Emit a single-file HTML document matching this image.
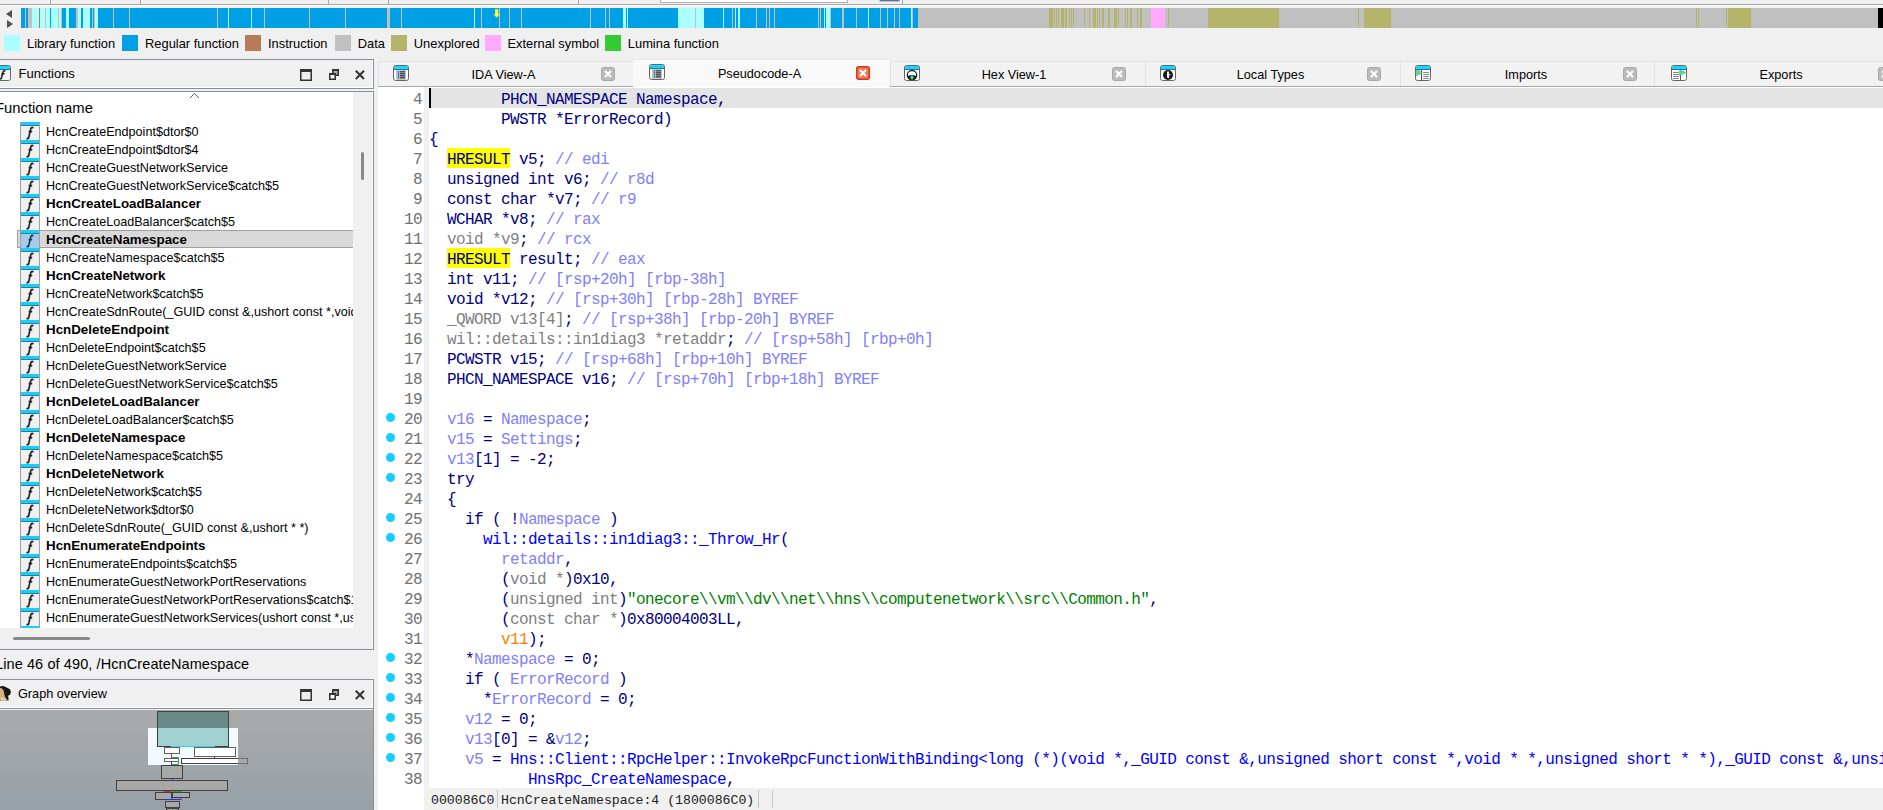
<!DOCTYPE html><html><head><meta charset="utf-8"><style>
*{box-sizing:border-box}
html,body{margin:0;padding:0}
body{width:1883px;height:810px;overflow:hidden;position:relative;background:#f0f0f0;font-family:"Liberation Sans",sans-serif;font-size:12.7px;color:#000}
.abs{position:absolute}
.t{position:absolute;white-space:pre;line-height:18px}
.code{position:absolute;left:429px;white-space:pre;font-family:"Liberation Mono",monospace;font-size:16px;letter-spacing:-0.6px;line-height:20px;color:#000080;height:20px}
.ln{position:absolute;left:378px;width:44px;text-align:right;white-space:pre;font-family:"Liberation Mono",monospace;font-size:16px;letter-spacing:-0.6px;line-height:20px;color:#707070;height:20px}
.g{color:#808080}.l{color:#8080ff}.b{color:#0000ff}.gr{color:#008000}.o{color:#ff8000}.y{}
.dot{position:absolute;left:386.3px;width:9px;height:9px;border-radius:50%;background:#14ceff}
.fr{position:absolute;left:0;width:353px;height:18px}
.fi{position:absolute;left:20px;top:0;width:20px;height:18px;background:#f0f0f0;border-left:1px solid #a0a0a0;border-right:1px solid #a0a0a0}
.fi:before{content:"";position:absolute;left:0;right:0;top:0;height:3px;background:#10d0ff;border-bottom:1px solid #3a7a90}
.fi span{position:absolute;left:4px;top:2px;font-family:"Liberation Serif",serif;font-style:italic;font-size:15px;line-height:16px;color:#202020;font-weight:bold}
.ft{position:absolute;left:46px;top:0;line-height:18px;white-space:pre;font-size:12.6px}
</style></head><body>

<div class="abs" style="left:0;top:4px;width:1883px;height:1px;background:#a8a8a8"></div>
<div class="abs" style="left:0;top:5px;width:1883px;height:1px;background:#fafafa"></div>
<div class="abs" style="left:50px;top:0;width:1px;height:4px;background:#a8a8a8"></div>
<div class="abs" style="left:140px;top:0;width:1px;height:4px;background:#a8a8a8"></div>
<div class="abs" style="left:328px;top:0;width:1px;height:4px;background:#a8a8a8"></div>
<div class="abs" style="left:388px;top:0;width:1px;height:4px;background:#a8a8a8"></div>
<div class="abs" style="left:578px;top:0;width:1px;height:4px;background:#a8a8a8"></div>
<div class="abs" style="left:902px;top:0;width:1px;height:4px;background:#a8a8a8"></div>
<div class="abs" style="left:660px;top:0;width:188px;height:3px;background:#fff;border:1px solid #b0b0b0;border-top:none"></div>
<div class="abs" style="left:879px;top:0;width:21px;height:2px;background:#707070;border:1px solid #9cc8f0;border-top:none;border-radius:0 0 3px 3px"></div>
<svg class="abs" style="left:0;top:8px" width="20" height="20"><path d="M12 2 L6 6 L12 10Z" fill="#505050"/><path d="M7 12 L13 16 L7 20Z" fill="#505050"/></svg>
<svg class="abs" style="left:0;top:8px" width="1883" height="20" shape-rendering="crispEdges"><rect x="21" y="0" width="897" height="20" fill="#00a0e6"/><rect x="25" y="0" width="1" height="20" fill="#c0c0c0"/><rect x="28" y="0" width="4" height="20" fill="#c0c0c0"/><rect x="32" y="0" width="7" height="20" fill="#aaffff"/><rect x="39" y="0" width="1" height="20" fill="#b87b57"/><rect x="40" y="0" width="5" height="20" fill="#aaffff"/><rect x="45" y="0" width="1" height="20" fill="#c0c0c0"/><rect x="46" y="0" width="4" height="20" fill="#aaffff"/><rect x="51" y="0" width="7" height="20" fill="#aaffff"/><rect x="58" y="0" width="1" height="20" fill="#c0c0c0"/><rect x="59" y="0" width="2" height="20" fill="#aaffff"/><rect x="61" y="0" width="1" height="20" fill="#c0c0c0"/><rect x="66" y="0" width="3" height="20" fill="#aaffff"/><rect x="76" y="0" width="2" height="20" fill="#c0c0c0"/><rect x="78" y="0" width="3" height="20" fill="#aaffff"/><rect x="83" y="0" width="7" height="20" fill="#aaffff"/><rect x="92" y="0" width="1" height="20" fill="#c0c0c0"/><rect x="94" y="0" width="1" height="20" fill="#c0c0c0"/><rect x="95" y="0" width="3" height="20" fill="#aaffff"/><rect x="113" y="0" width="1" height="20" fill="#c0c0c0"/><rect x="129" y="0" width="1" height="20" fill="#c0c0c0"/><rect x="217" y="0" width="1" height="20" fill="#c0c0c0"/><rect x="264" y="0" width="1" height="20" fill="#c0c0c0"/><rect x="309" y="0" width="1" height="20" fill="#c0c0c0"/><rect x="345" y="0" width="1" height="20" fill="#c0c0c0"/><rect x="401" y="0" width="1" height="20" fill="#c0c0c0"/><rect x="481" y="0" width="1" height="20" fill="#c0c0c0"/><rect x="499" y="0" width="1" height="20" fill="#c0c0c0"/><rect x="509" y="0" width="1" height="20" fill="#c0c0c0"/><rect x="521" y="0" width="1" height="20" fill="#c0c0c0"/><rect x="590" y="0" width="1" height="20" fill="#c0c0c0"/><rect x="605" y="0" width="1" height="20" fill="#c0c0c0"/><rect x="609" y="0" width="1" height="20" fill="#c0c0c0"/><rect x="695" y="0" width="1" height="20" fill="#c0c0c0"/><rect x="732" y="0" width="1" height="20" fill="#c0c0c0"/><rect x="756" y="0" width="1" height="20" fill="#c0c0c0"/><rect x="766" y="0" width="1" height="20" fill="#c0c0c0"/><rect x="769" y="0" width="1" height="20" fill="#c0c0c0"/><rect x="774" y="0" width="1" height="20" fill="#c0c0c0"/><rect x="818" y="0" width="1" height="20" fill="#c0c0c0"/><rect x="820" y="0" width="1" height="20" fill="#c0c0c0"/><rect x="830" y="0" width="1" height="20" fill="#c0c0c0"/><rect x="842" y="0" width="1" height="20" fill="#c0c0c0"/><rect x="843" y="0" width="1" height="20" fill="#c0c0c0"/><rect x="856" y="0" width="1" height="20" fill="#c0c0c0"/><rect x="880" y="0" width="1" height="20" fill="#c0c0c0"/><rect x="887" y="0" width="1" height="20" fill="#c0c0c0"/><rect x="894" y="0" width="1" height="20" fill="#c0c0c0"/><rect x="899" y="0" width="1" height="20" fill="#c0c0c0"/><rect x="912" y="0" width="1" height="20" fill="#c0c0c0"/><rect x="387" y="0" width="3" height="20" fill="#c0c0c0"/><rect x="228" y="0" width="1" height="20" fill="#aaffff"/><rect x="251" y="0" width="1" height="20" fill="#aaffff"/><rect x="474" y="0" width="1" height="20" fill="#aaffff"/><rect x="723" y="0" width="1" height="20" fill="#aaffff"/><rect x="735" y="0" width="1" height="20" fill="#aaffff"/><rect x="868" y="0" width="1" height="20" fill="#aaffff"/><rect x="911" y="0" width="1" height="20" fill="#aaffff"/><rect x="623" y="0" width="3" height="20" fill="#aaffff"/><rect x="627" y="0" width="1" height="20" fill="#aaffff"/><rect x="678" y="0" width="17" height="20" fill="#aaffff"/><rect x="696" y="0" width="8" height="20" fill="#aaffff"/><rect x="738" y="0" width="2" height="20" fill="#aaffff"/><rect x="824" y="0" width="1" height="20" fill="#aaffff"/><rect x="826" y="0" width="4" height="20" fill="#aaffff"/><rect x="918" y="0" width="960" height="20" fill="#c0c0c0"/><rect x="1878" y="0" width="5" height="20" fill="#000000"/><rect x="1049" y="0" width="4" height="20" fill="#b4b46a"/><rect x="1053.6" y="0" width="1.0" height="20" fill="#b4b46a"/><rect x="1055.5" y="0" width="1.0" height="20" fill="#b4b46a"/><rect x="1058" y="0" width="1" height="20" fill="#b4b46a"/><rect x="1060.5" y="0" width="1.0" height="20" fill="#b4b46a"/><rect x="1062.4" y="0" width="1.3999999999998636" height="20" fill="#b4b46a"/><rect x="1065" y="0" width="2" height="20" fill="#b4b46a"/><rect x="1068.7" y="0" width="1.0" height="20" fill="#b4b46a"/><rect x="1070.7" y="0" width="1.0" height="20" fill="#b4b46a"/><rect x="1072.8" y="0" width="1.2000000000000455" height="20" fill="#b4b46a"/><rect x="1084" y="0" width="1" height="20" fill="#b4b46a"/><rect x="1089" y="0" width="1" height="20" fill="#b4b46a"/><rect x="1093" y="0" width="3" height="20" fill="#b4b46a"/><rect x="1097" y="0" width="1" height="20" fill="#b4b46a"/><rect x="1099" y="0" width="1" height="20" fill="#b4b46a"/><rect x="1102" y="0" width="2" height="20" fill="#b4b46a"/><rect x="1108" y="0" width="2" height="20" fill="#b4b46a"/><rect x="1114" y="0" width="3" height="20" fill="#b4b46a"/><rect x="1118" y="0" width="1" height="20" fill="#b4b46a"/><rect x="1125" y="0" width="1" height="20" fill="#b4b46a"/><rect x="1127" y="0" width="1" height="20" fill="#b4b46a"/><rect x="1130" y="0" width="2" height="20" fill="#b4b46a"/><rect x="1137" y="0" width="1" height="20" fill="#b4b46a"/><rect x="1140" y="0" width="2" height="20" fill="#b4b46a"/><rect x="1168" y="0" width="1" height="20" fill="#b4b46a"/><rect x="1208" y="0" width="71" height="20" fill="#b4b46a"/><rect x="1358" y="0" width="1" height="20" fill="#b4b46a"/><rect x="1364" y="0" width="27" height="20" fill="#b4b46a"/><rect x="1696" y="0" width="1" height="20" fill="#b4b46a"/><rect x="1698" y="0" width="1" height="20" fill="#b4b46a"/><rect x="1726" y="0" width="1" height="20" fill="#b4b46a"/><rect x="1728" y="0" width="23" height="20" fill="#b4b46a"/><rect x="1151" y="0" width="14" height="20" fill="#ffaaff"/></svg><svg class="abs" style="left:0;top:8px" width="600" height="20"><path d="M495 1.2h3.2v5.3h1.6L496.6 9.6L493.4 6.5H495z" fill="#ffff40"/></svg>
<div class="abs" style="left:4px;top:35px;width:16px;height:16px;background:#aaffff"></div>
<div class="t" style="left:27.0px;top:35px;font-size:12.9px">Library function</div>
<div class="abs" style="left:122px;top:35px;width:16px;height:16px;background:#00a0e6"></div>
<div class="t" style="left:145.0px;top:35px;font-size:12.9px">Regular function</div>
<div class="abs" style="left:245px;top:35px;width:16px;height:16px;background:#b87b57"></div>
<div class="t" style="left:268.0px;top:35px;font-size:12.9px">Instruction</div>
<div class="abs" style="left:335px;top:35px;width:16px;height:16px;background:#c0c0c0"></div>
<div class="t" style="left:357.7px;top:35px;font-size:12.9px">Data</div>
<div class="abs" style="left:391px;top:35px;width:16px;height:16px;background:#b4b46a"></div>
<div class="t" style="left:413.8px;top:35px;font-size:12.9px">Unexplored</div>
<div class="abs" style="left:485px;top:35px;width:16px;height:16px;background:#ffaaff"></div>
<div class="t" style="left:507.5px;top:35px;font-size:12.9px">External symbol</div>
<div class="abs" style="left:605px;top:35px;width:16px;height:16px;background:#33cc33"></div>
<div class="t" style="left:627.8px;top:35px;font-size:12.9px">Lumina function</div>
<div class="abs" style="left:-2px;top:59px;width:376px;height:30px;border:1px solid #8a909a;background:#f0f0f0"></div>
<div class="abs" style="left:-1px;top:60px;width:374px;height:28px;border-right:1px solid #fff;border-bottom:1px solid #fff"></div>
<svg class="abs" style="left:-5px;top:65px" width="16" height="16"><rect x="0.5" y="0.5" width="15" height="15" rx="2" fill="#f6f6f6" stroke="#666"/><rect x="1" y="1" width="14" height="3" fill="#10d8ff"/><line x1="1" y1="4.5" x2="15" y2="4.5" stroke="#3a7080"/><path d="M10.4 6.4Q9.3 4.9 8.2 6.6L6.4 12.9Q5.9 14.4 4.4 13.6M6.3 8.7H9.6" stroke="#222" stroke-width="1.6" fill="none"/></svg>
<div class="t" style="left:18.5px;top:65px;font-size:13px">Functions</div>
<svg class="abs" style="left:298px;top:67px" width="70" height="16"><rect x="2.75" y="2.75" width="10.5" height="10.5" stroke="#333" stroke-width="1.5" fill="#eee"/><rect x="2" y="2" width="12" height="3" fill="#333"/><rect x="34.75" y="2.75" width="5.5" height="5.5" stroke="#333" stroke-width="1.5" fill="#aaa"/><rect x="34" y="2" width="7" height="2" fill="#333"/><rect x="31.75" y="6.75" width="5.5" height="5.5" stroke="#333" stroke-width="1.5" fill="#f6f6f6"/><rect x="31" y="6" width="7" height="2" fill="#333"/><path d="M57.8 3.8L66 12M66 3.8L57.8 12" stroke="#333" stroke-width="2"/></svg>
<div class="abs" style="left:-2px;top:91px;width:376px;height:559px;border:1px solid #8a909a;background:#f0f0f0"></div>
<div class="abs" style="left:0;top:92px;width:353px;height:536px;background:#fff;overflow:hidden" id="fl">
<div class="t" style="left:-5px;top:6px;font-size:14.8px;line-height:20px">Function name</div>
<svg class="abs" style="left:189px;top:0px" width="12" height="8"><path d="M1 6L5.5 1.5L10 6" stroke="#606060" stroke-width="1" fill="none"/></svg>
<div class="fr" style="top:30px">
<div class="fi"><svg style="position:absolute;left:-1px;top:0" width="20" height="18"><path d="M13.2 6.2Q12 4.6 10.9 6.4L8.7 15.6Q8.1 17.3 6.6 16.3M8.6 9.7H12.2" stroke="#222" stroke-width="1.7" fill="none"/></svg></div>
<div class="ft" style="top:1px;">HcnCreateEndpoint$dtor$0</div>
</div>
<div class="fr" style="top:48px">
<div class="fi"><svg style="position:absolute;left:-1px;top:0" width="20" height="18"><path d="M13.2 6.2Q12 4.6 10.9 6.4L8.7 15.6Q8.1 17.3 6.6 16.3M8.6 9.7H12.2" stroke="#222" stroke-width="1.7" fill="none"/></svg></div>
<div class="ft" style="top:1px;">HcnCreateEndpoint$dtor$4</div>
</div>
<div class="fr" style="top:66px">
<div class="fi"><svg style="position:absolute;left:-1px;top:0" width="20" height="18"><path d="M13.2 6.2Q12 4.6 10.9 6.4L8.7 15.6Q8.1 17.3 6.6 16.3M8.6 9.7H12.2" stroke="#222" stroke-width="1.7" fill="none"/></svg></div>
<div class="ft" style="top:1px;">HcnCreateGuestNetworkService</div>
</div>
<div class="fr" style="top:84px">
<div class="fi"><svg style="position:absolute;left:-1px;top:0" width="20" height="18"><path d="M13.2 6.2Q12 4.6 10.9 6.4L8.7 15.6Q8.1 17.3 6.6 16.3M8.6 9.7H12.2" stroke="#222" stroke-width="1.7" fill="none"/></svg></div>
<div class="ft" style="top:1px;">HcnCreateGuestNetworkService$catch$5</div>
</div>
<div class="fr" style="top:102px">
<div class="fi"><svg style="position:absolute;left:-1px;top:0" width="20" height="18"><path d="M13.2 6.2Q12 4.6 10.9 6.4L8.7 15.6Q8.1 17.3 6.6 16.3M8.6 9.7H12.2" stroke="#222" stroke-width="1.7" fill="none"/></svg></div>
<div class="ft" style="top:1px;font-weight:bold;font-size:13.35px;">HcnCreateLoadBalancer</div>
</div>
<div class="fr" style="top:120px">
<div class="fi"><svg style="position:absolute;left:-1px;top:0" width="20" height="18"><path d="M13.2 6.2Q12 4.6 10.9 6.4L8.7 15.6Q8.1 17.3 6.6 16.3M8.6 9.7H12.2" stroke="#222" stroke-width="1.7" fill="none"/></svg></div>
<div class="ft" style="top:1px;">HcnCreateLoadBalancer$catch$5</div>
</div>
<div class="abs" style="left:17px;top:138px;width:340px;height:18px;background:#d9d9d9;border:1px solid #a0a0a0"></div>
<div class="fr" style="top:138px">
<div class="fi" style="background:#a8cce8"><svg style="position:absolute;left:-1px;top:0" width="20" height="18"><path d="M13.2 6.2Q12 4.6 10.9 6.4L8.7 15.6Q8.1 17.3 6.6 16.3M8.6 9.7H12.2" stroke="#1a3a5a" stroke-width="1.7" fill="none"/></svg></div>
<div class="ft" style="top:1px;font-weight:bold;font-size:13.35px;">HcnCreateNamespace</div>
</div>
<div class="fr" style="top:156px">
<div class="fi"><svg style="position:absolute;left:-1px;top:0" width="20" height="18"><path d="M13.2 6.2Q12 4.6 10.9 6.4L8.7 15.6Q8.1 17.3 6.6 16.3M8.6 9.7H12.2" stroke="#222" stroke-width="1.7" fill="none"/></svg></div>
<div class="ft" style="top:1px;">HcnCreateNamespace$catch$5</div>
</div>
<div class="fr" style="top:174px">
<div class="fi"><svg style="position:absolute;left:-1px;top:0" width="20" height="18"><path d="M13.2 6.2Q12 4.6 10.9 6.4L8.7 15.6Q8.1 17.3 6.6 16.3M8.6 9.7H12.2" stroke="#222" stroke-width="1.7" fill="none"/></svg></div>
<div class="ft" style="top:1px;font-weight:bold;font-size:13.35px;">HcnCreateNetwork</div>
</div>
<div class="fr" style="top:192px">
<div class="fi"><svg style="position:absolute;left:-1px;top:0" width="20" height="18"><path d="M13.2 6.2Q12 4.6 10.9 6.4L8.7 15.6Q8.1 17.3 6.6 16.3M8.6 9.7H12.2" stroke="#222" stroke-width="1.7" fill="none"/></svg></div>
<div class="ft" style="top:1px;">HcnCreateNetwork$catch$5</div>
</div>
<div class="fr" style="top:210px">
<div class="fi"><svg style="position:absolute;left:-1px;top:0" width="20" height="18"><path d="M13.2 6.2Q12 4.6 10.9 6.4L8.7 15.6Q8.1 17.3 6.6 16.3M8.6 9.7H12.2" stroke="#222" stroke-width="1.7" fill="none"/></svg></div>
<div class="ft" style="top:1px;">HcnCreateSdnRoute(_GUID const &amp;,ushort const *,void * *)</div>
</div>
<div class="fr" style="top:228px">
<div class="fi"><svg style="position:absolute;left:-1px;top:0" width="20" height="18"><path d="M13.2 6.2Q12 4.6 10.9 6.4L8.7 15.6Q8.1 17.3 6.6 16.3M8.6 9.7H12.2" stroke="#222" stroke-width="1.7" fill="none"/></svg></div>
<div class="ft" style="top:1px;font-weight:bold;font-size:13.35px;">HcnDeleteEndpoint</div>
</div>
<div class="fr" style="top:246px">
<div class="fi"><svg style="position:absolute;left:-1px;top:0" width="20" height="18"><path d="M13.2 6.2Q12 4.6 10.9 6.4L8.7 15.6Q8.1 17.3 6.6 16.3M8.6 9.7H12.2" stroke="#222" stroke-width="1.7" fill="none"/></svg></div>
<div class="ft" style="top:1px;">HcnDeleteEndpoint$catch$5</div>
</div>
<div class="fr" style="top:264px">
<div class="fi"><svg style="position:absolute;left:-1px;top:0" width="20" height="18"><path d="M13.2 6.2Q12 4.6 10.9 6.4L8.7 15.6Q8.1 17.3 6.6 16.3M8.6 9.7H12.2" stroke="#222" stroke-width="1.7" fill="none"/></svg></div>
<div class="ft" style="top:1px;">HcnDeleteGuestNetworkService</div>
</div>
<div class="fr" style="top:282px">
<div class="fi"><svg style="position:absolute;left:-1px;top:0" width="20" height="18"><path d="M13.2 6.2Q12 4.6 10.9 6.4L8.7 15.6Q8.1 17.3 6.6 16.3M8.6 9.7H12.2" stroke="#222" stroke-width="1.7" fill="none"/></svg></div>
<div class="ft" style="top:1px;">HcnDeleteGuestNetworkService$catch$5</div>
</div>
<div class="fr" style="top:300px">
<div class="fi"><svg style="position:absolute;left:-1px;top:0" width="20" height="18"><path d="M13.2 6.2Q12 4.6 10.9 6.4L8.7 15.6Q8.1 17.3 6.6 16.3M8.6 9.7H12.2" stroke="#222" stroke-width="1.7" fill="none"/></svg></div>
<div class="ft" style="top:1px;font-weight:bold;font-size:13.35px;">HcnDeleteLoadBalancer</div>
</div>
<div class="fr" style="top:318px">
<div class="fi"><svg style="position:absolute;left:-1px;top:0" width="20" height="18"><path d="M13.2 6.2Q12 4.6 10.9 6.4L8.7 15.6Q8.1 17.3 6.6 16.3M8.6 9.7H12.2" stroke="#222" stroke-width="1.7" fill="none"/></svg></div>
<div class="ft" style="top:1px;">HcnDeleteLoadBalancer$catch$5</div>
</div>
<div class="fr" style="top:336px">
<div class="fi"><svg style="position:absolute;left:-1px;top:0" width="20" height="18"><path d="M13.2 6.2Q12 4.6 10.9 6.4L8.7 15.6Q8.1 17.3 6.6 16.3M8.6 9.7H12.2" stroke="#222" stroke-width="1.7" fill="none"/></svg></div>
<div class="ft" style="top:1px;font-weight:bold;font-size:13.35px;">HcnDeleteNamespace</div>
</div>
<div class="fr" style="top:354px">
<div class="fi"><svg style="position:absolute;left:-1px;top:0" width="20" height="18"><path d="M13.2 6.2Q12 4.6 10.9 6.4L8.7 15.6Q8.1 17.3 6.6 16.3M8.6 9.7H12.2" stroke="#222" stroke-width="1.7" fill="none"/></svg></div>
<div class="ft" style="top:1px;">HcnDeleteNamespace$catch$5</div>
</div>
<div class="fr" style="top:372px">
<div class="fi"><svg style="position:absolute;left:-1px;top:0" width="20" height="18"><path d="M13.2 6.2Q12 4.6 10.9 6.4L8.7 15.6Q8.1 17.3 6.6 16.3M8.6 9.7H12.2" stroke="#222" stroke-width="1.7" fill="none"/></svg></div>
<div class="ft" style="top:1px;font-weight:bold;font-size:13.35px;">HcnDeleteNetwork</div>
</div>
<div class="fr" style="top:390px">
<div class="fi"><svg style="position:absolute;left:-1px;top:0" width="20" height="18"><path d="M13.2 6.2Q12 4.6 10.9 6.4L8.7 15.6Q8.1 17.3 6.6 16.3M8.6 9.7H12.2" stroke="#222" stroke-width="1.7" fill="none"/></svg></div>
<div class="ft" style="top:1px;">HcnDeleteNetwork$catch$5</div>
</div>
<div class="fr" style="top:408px">
<div class="fi"><svg style="position:absolute;left:-1px;top:0" width="20" height="18"><path d="M13.2 6.2Q12 4.6 10.9 6.4L8.7 15.6Q8.1 17.3 6.6 16.3M8.6 9.7H12.2" stroke="#222" stroke-width="1.7" fill="none"/></svg></div>
<div class="ft" style="top:1px;">HcnDeleteNetwork$dtor$0</div>
</div>
<div class="fr" style="top:426px">
<div class="fi"><svg style="position:absolute;left:-1px;top:0" width="20" height="18"><path d="M13.2 6.2Q12 4.6 10.9 6.4L8.7 15.6Q8.1 17.3 6.6 16.3M8.6 9.7H12.2" stroke="#222" stroke-width="1.7" fill="none"/></svg></div>
<div class="ft" style="top:1px;">HcnDeleteSdnRoute(_GUID const &amp;,ushort * *)</div>
</div>
<div class="fr" style="top:444px">
<div class="fi"><svg style="position:absolute;left:-1px;top:0" width="20" height="18"><path d="M13.2 6.2Q12 4.6 10.9 6.4L8.7 15.6Q8.1 17.3 6.6 16.3M8.6 9.7H12.2" stroke="#222" stroke-width="1.7" fill="none"/></svg></div>
<div class="ft" style="top:1px;font-weight:bold;font-size:13.35px;">HcnEnumerateEndpoints</div>
</div>
<div class="fr" style="top:462px">
<div class="fi"><svg style="position:absolute;left:-1px;top:0" width="20" height="18"><path d="M13.2 6.2Q12 4.6 10.9 6.4L8.7 15.6Q8.1 17.3 6.6 16.3M8.6 9.7H12.2" stroke="#222" stroke-width="1.7" fill="none"/></svg></div>
<div class="ft" style="top:1px;">HcnEnumerateEndpoints$catch$5</div>
</div>
<div class="fr" style="top:480px">
<div class="fi"><svg style="position:absolute;left:-1px;top:0" width="20" height="18"><path d="M13.2 6.2Q12 4.6 10.9 6.4L8.7 15.6Q8.1 17.3 6.6 16.3M8.6 9.7H12.2" stroke="#222" stroke-width="1.7" fill="none"/></svg></div>
<div class="ft" style="top:1px;">HcnEnumerateGuestNetworkPortReservations</div>
</div>
<div class="fr" style="top:498px">
<div class="fi"><svg style="position:absolute;left:-1px;top:0" width="20" height="18"><path d="M13.2 6.2Q12 4.6 10.9 6.4L8.7 15.6Q8.1 17.3 6.6 16.3M8.6 9.7H12.2" stroke="#222" stroke-width="1.7" fill="none"/></svg></div>
<div class="ft" style="top:1px;">HcnEnumerateGuestNetworkPortReservations$catch$15</div>
</div>
<div class="fr" style="top:516px">
<div class="fi"><svg style="position:absolute;left:-1px;top:0" width="20" height="18"><path d="M13.2 6.2Q12 4.6 10.9 6.4L8.7 15.6Q8.1 17.3 6.6 16.3M8.6 9.7H12.2" stroke="#222" stroke-width="1.7" fill="none"/></svg></div>
<div class="ft" style="top:1px;">HcnEnumerateGuestNetworkServices(ushort const *,ushort * *)</div>
</div>
<div class="fr" style="top:534px">
<div class="fi"><svg style="position:absolute;left:-1px;top:0" width="20" height="18"><path d="M13.2 6.2Q12 4.6 10.9 6.4L8.7 15.6Q8.1 17.3 6.6 16.3M8.6 9.7H12.2" stroke="#222" stroke-width="1.7" fill="none"/></svg></div>
<div class="ft" style="top:1px;">HcnEnumerateGuestNetworkServicesX</div>
</div>
</div>
<div class="abs" style="left:353px;top:92px;width:20px;height:536px;background:#f0f0f0"></div>
<div class="abs" style="left:361px;top:152px;width:3px;height:28px;background:#888;border-radius:2px"></div>
<div class="abs" style="left:13px;top:637px;width:77px;height:3px;background:#888;border-radius:2px"></div>
<div class="abs" style="left:372px;top:92px;width:1px;height:557px;background:#fff"></div>
<div class="t" style="left:-5px;top:655px;font-size:14.5px;letter-spacing:0.1px;line-height:18px">Line 46 of 490, /HcnCreateNamespace</div>
<div class="abs" style="left:-2px;top:679px;width:376px;height:30px;border:1px solid #8a909a;background:#f0f0f0"></div>
<div class="abs" style="left:-1px;top:680px;width:374px;height:28px;border-right:1px solid #fff;border-bottom:1px solid #fff"></div>
<svg class="abs" style="left:0;top:682px" width="16" height="22"><path d="M0 4.5Q4 3.3 7 5.8Q10.8 6.8 10.8 10Q10.8 13 8.2 13.6L8.6 18.6L0 18.6Z" fill="#161616"/><path d="M0 6Q3 6 3.6 9Q4.4 13 5.2 15Q6.4 17 8 18.6L0 18.6Z" fill="#d4b080"/><path d="M1 15Q4 15.5 6.5 18.6H1Z" fill="#e8d8a0"/></svg>
<div class="t" style="left:18px;top:685px">Graph overview</div>
<svg class="abs" style="left:298px;top:687px" width="70" height="16"><rect x="2.75" y="2.75" width="10.5" height="10.5" stroke="#333" stroke-width="1.5" fill="#eee"/><rect x="2" y="2" width="12" height="3" fill="#333"/><rect x="34.75" y="2.75" width="5.5" height="5.5" stroke="#333" stroke-width="1.5" fill="#aaa"/><rect x="34" y="2" width="7" height="2" fill="#333"/><rect x="31.75" y="6.75" width="5.5" height="5.5" stroke="#333" stroke-width="1.5" fill="#f6f6f6"/><rect x="31" y="6" width="7" height="2" fill="#333"/><path d="M57.8 3.8L66 12M66 3.8L57.8 12" stroke="#333" stroke-width="2"/></svg>
<div class="abs" style="left:0;top:710px;width:373px;height:100px;background:linear-gradient(#aaaaaa,#97a1a9)"></div>
<div class="abs" style="left:373px;top:709px;width:1px;height:101px;background:#8a909a"></div>
<svg class="abs" style="left:0;top:710px" width="373" height="100"><rect x="148" y="18" width="90" height="37" fill="#f2faff"/><rect x="181.5" y="48.5" width="66" height="5" fill="#fff" stroke="#404040" stroke-width="1"/><rect x="238" y="48.5" width="9.5" height="5" fill="#a8a8a8"/><rect x="164.5" y="37.5" width="15" height="6" fill="#fff" stroke="#606060" stroke-width="1"/><rect x="194.5" y="37.5" width="41" height="9" fill="#fff" stroke="#606060" stroke-width="1"/><rect x="164.5" y="48.5" width="14" height="3" fill="#fff" stroke="#606060" stroke-width="1"/><rect x="161.5" y="55.5" width="21" height="13" fill="#a8a8a8" stroke="#404040" stroke-width="1"/><rect x="116.5" y="70.5" width="111" height="10" fill="#a8a8a8" stroke="#404040" stroke-width="1"/><rect x="155.5" y="82.5" width="16" height="7" fill="#a8a8a8" stroke="#404040" stroke-width="1"/><rect x="172.5" y="82.5" width="17" height="5" fill="#a8a8a8" stroke="#404040" stroke-width="1"/><rect x="165.5" y="91.5" width="14" height="6" fill="#a8a8a8" stroke="#404040" stroke-width="1"/><rect x="166.5" y="98.5" width="12" height="3" fill="#a8a8a8" stroke="#404040" stroke-width="1"/><rect x="157.5" y="1.5" width="71" height="35" fill="#6a8a88" stroke="#404040"/><rect x="158" y="18" width="70" height="18" fill="#a0d0d0"/><path d="M171.5 43.5v4.5" stroke="#e03030" fill="none"/><path d="M171.5 47.5h7v7h-6.5" stroke="#30a040" fill="none"/><path d="M171.5 51.5v4" stroke="#3030e0" fill="none"/><path d="M214.5 46.5v2" stroke="#3030e0" fill="none"/><path d="M172.5 68.5v2" stroke="#3030e0" fill="none"/><path d="M163.5 81.5h8" stroke="#d03030" fill="none"/><path d="M172.5 81.5h9" stroke="#30a040" fill="none"/><path d="M164 89.5h17v-2" stroke="#3030e0" fill="none"/><path d="M172.5 98.5v2" stroke="#30a040" fill="none"/><path d="M171 36.5h44" stroke="#20e0f0" fill="none"/></svg>
<div class="abs" style="left:378px;top:86px;width:1505px;height:1px;background:#a8a8a8"></div>
<div class="abs" style="left:378px;top:61px;width:255px;height:25px;background:#f2f2f2;border-top:1px solid #e2e2e2;border-left:1px solid #e2e2e2"></div>
<svg class="abs" style="left:393px;top:65px" width="16" height="16"><rect x="0.5" y="0.5" width="15" height="15" rx="2" fill="#fff" stroke="#666"/><rect x="1" y="1" width="14" height="3" fill="#10d8ff"/><line x1="1" y1="4.5" x2="15" y2="4.5" stroke="#3a7080"/><rect x="3" y="5" width="10" height="10" fill="#c8c8c8"/><circle cx="5.5" cy="6.8" r="0.9" fill="#1a7ac0"/><rect x="7" y="6.3" width="5" height="1.1" fill="#222"/><circle cx="5.5" cy="8.8" r="0.9" fill="#1a7ac0"/><rect x="7" y="8.3" width="5" height="1.1" fill="#222"/><circle cx="5.5" cy="10.8" r="0.9" fill="#1a7ac0"/><rect x="7" y="10.3" width="5" height="1.1" fill="#222"/><circle cx="5.5" cy="12.8" r="0.9" fill="#1a7ac0"/><rect x="7" y="12.3" width="5" height="1.1" fill="#222"/></svg>
<div class="t" style="left:403.5px;width:200px;text-align:center;top:66px;line-height:18px">IDA View-A</div>
<svg class="abs" style="left:601px;top:67px" width="14" height="14"><rect x="0.5" y="0.5" width="13" height="13" rx="2" fill="#bcbcbc" stroke="#a8a8a8"/><path d="M4 4L10 10M10 4L4 10" stroke="#fff" stroke-width="2"/></svg>
<div class="abs" style="left:633px;top:59px;width:257px;height:29px;background:#f9f9f9;border-top:1px solid #e8e8e8"></div>
<svg class="abs" style="left:649px;top:64px" width="16" height="16"><rect x="0.5" y="0.5" width="15" height="15" rx="2" fill="#fff" stroke="#666"/><rect x="1" y="1" width="14" height="3" fill="#10d8ff"/><line x1="1" y1="4.5" x2="15" y2="4.5" stroke="#3a7080"/><rect x="3" y="5" width="10" height="10" fill="#c8c8c8"/><circle cx="5.5" cy="6.8" r="0.9" fill="#1a7ac0"/><rect x="7" y="6.3" width="5" height="1.1" fill="#222"/><circle cx="5.5" cy="8.8" r="0.9" fill="#1a7ac0"/><rect x="7" y="8.3" width="5" height="1.1" fill="#222"/><circle cx="5.5" cy="10.8" r="0.9" fill="#1a7ac0"/><rect x="7" y="10.3" width="5" height="1.1" fill="#222"/><circle cx="5.5" cy="12.8" r="0.9" fill="#1a7ac0"/><rect x="7" y="12.3" width="5" height="1.1" fill="#222"/></svg>
<div class="t" style="left:659.5px;width:200px;text-align:center;top:65px;line-height:18px">Pseudocode-A</div>
<svg class="abs" style="left:856px;top:66px" width="14" height="14"><rect x="0.75" y="0.75" width="12.5" height="12.5" rx="2" fill="#e8805a" stroke="#e0301e" stroke-width="1.5"/><path d="M4 4L10 10M10 4L4 10" stroke="#fff" stroke-width="2"/></svg>
<div class="abs" style="left:890px;top:61px;width:255px;height:25px;background:#f2f2f2;border-top:1px solid #e2e2e2;border-left:1px solid #e2e2e2"></div>
<svg class="abs" style="left:904px;top:65px" width="16" height="16"><rect x="0.5" y="0.5" width="15" height="15" rx="2" fill="#fff" stroke="#666"/><rect x="1" y="1" width="14" height="3" fill="#10d8ff"/><line x1="1" y1="4.5" x2="15" y2="4.5" stroke="#3a7080"/><circle cx="8" cy="10.2" r="4.7" fill="none" stroke="#222" stroke-width="1.3"/><path d="M3.4 11.2Q8 8.6 12.6 11.2Q11.5 15 8 15Q4.5 15 3.4 11.2z" fill="#222"/><ellipse cx="8" cy="12.4" rx="1.4" ry="2" fill="#44ee88"/></svg>
<div class="t" style="left:914px;width:200px;text-align:center;top:66px;line-height:18px">Hex View-1</div>
<svg class="abs" style="left:1112px;top:67px" width="14" height="14"><rect x="0.5" y="0.5" width="13" height="13" rx="2" fill="#bcbcbc" stroke="#a8a8a8"/><path d="M4 4L10 10M10 4L4 10" stroke="#fff" stroke-width="2"/></svg>
<div class="abs" style="left:1145px;top:61px;width:255px;height:25px;background:#f2f2f2;border-top:1px solid #e2e2e2;border-left:1px solid #e2e2e2"></div>
<svg class="abs" style="left:1160px;top:65px" width="16" height="16"><rect x="0.5" y="0.5" width="15" height="15" rx="2" fill="#fff" stroke="#666"/><rect x="1" y="1" width="14" height="3" fill="#10d8ff"/><line x1="1" y1="4.5" x2="15" y2="4.5" stroke="#3a7080"/><circle cx="8" cy="10" r="5" fill="#1a1a1a"/><path d="M7 6.5h2v2.5h1.3v1.2H9V13H7.6L7 12.2z" fill="#fff"/></svg>
<div class="t" style="left:1170.5px;width:200px;text-align:center;top:66px;line-height:18px">Local Types</div>
<svg class="abs" style="left:1367px;top:67px" width="14" height="14"><rect x="0.5" y="0.5" width="13" height="13" rx="2" fill="#bcbcbc" stroke="#a8a8a8"/><path d="M4 4L10 10M10 4L4 10" stroke="#fff" stroke-width="2"/></svg>
<div class="abs" style="left:1400px;top:61px;width:254px;height:25px;background:#f2f2f2;border-top:1px solid #e2e2e2;border-left:1px solid #e2e2e2"></div>
<svg class="abs" style="left:1415px;top:65px" width="16" height="16"><rect x="0.5" y="0.5" width="15" height="15" rx="2" fill="#fff" stroke="#666"/><rect x="1" y="1" width="14" height="3" fill="#10d8ff"/><line x1="1" y1="4.5" x2="15" y2="4.5" stroke="#3a7080"/><line x1="6.5" y1="5" x2="6.5" y2="15" stroke="#555"/><rect x="8.3" y="7" width="5.6" height="0.9" fill="#777"/><rect x="8.3" y="9" width="5.6" height="0.9" fill="#777"/><rect x="8.3" y="11" width="5.6" height="0.9" fill="#777"/><rect x="8.3" y="13" width="5.6" height="0.9" fill="#777"/><path d="M1.3 4.6L7.6 7.6L1.3 10.8z" fill="#55dd99" stroke="#3a9a6a" stroke-width="0.4"/></svg>
<div class="t" style="left:1426px;width:200px;text-align:center;top:66px;line-height:18px">Imports</div>
<svg class="abs" style="left:1623px;top:67px" width="14" height="14"><rect x="0.5" y="0.5" width="13" height="13" rx="2" fill="#bcbcbc" stroke="#a8a8a8"/><path d="M4 4L10 10M10 4L4 10" stroke="#fff" stroke-width="2"/></svg>
<div class="abs" style="left:1654px;top:61px;width:256px;height:25px;background:#f2f2f2;border-top:1px solid #e2e2e2;border-left:1px solid #e2e2e2"></div>
<svg class="abs" style="left:1671px;top:65px" width="16" height="16"><rect x="0.5" y="0.5" width="15" height="15" rx="2" fill="#fff" stroke="#666"/><rect x="1" y="1" width="14" height="3" fill="#10d8ff"/><line x1="1" y1="4.5" x2="15" y2="4.5" stroke="#3a7080"/><line x1="9.5" y1="5" x2="9.5" y2="15" stroke="#555"/><rect x="2.1" y="7" width="5.6" height="0.9" fill="#777"/><rect x="2.1" y="9" width="5.6" height="0.9" fill="#777"/><rect x="2.1" y="11" width="5.6" height="0.9" fill="#777"/><rect x="2.1" y="13" width="5.6" height="0.9" fill="#777"/><path d="M8.4 4.6L14.7 7.6L8.4 10.8z" fill="#55dd99" stroke="#3a9a6a" stroke-width="0.4"/></svg>
<div class="t" style="left:1681px;width:200px;text-align:center;top:66px;line-height:18px">Exports</div>
<svg class="abs" style="left:1878px;top:67px" width="14" height="14"><rect x="0.5" y="0.5" width="13" height="13" rx="2" fill="#bcbcbc" stroke="#a8a8a8"/><path d="M4 4L10 10M10 4L4 10" stroke="#fff" stroke-width="2"/></svg>
<div class="abs" style="left:376px;top:87px;width:1507px;height:723px;background:#fff"></div>
<div class="abs" style="left:376px;top:87px;width:2px;height:723px;background:#f0f0f0"></div>
<div class="abs" style="left:424px;top:87px;width:5px;height:701px;background:#f0f0f0"></div>
<div class="abs" style="left:431px;top:88px;width:1452px;height:20px;background:#e4e4e4"></div>
<div class="abs" style="left:429px;top:88px;width:2px;height:20px;background:#000"></div>
<div class="abs" style="left:424px;top:788px;width:1459px;height:22px;background:#f0f0f0"></div>
<div class="abs" style="left:431px;top:792px;white-space:pre;font-family:Liberation Mono,monospace;font-size:13.2px;line-height:18px;color:#202020">000086C0</div>
<div class="abs" style="left:497px;top:790px;width:1px;height:18px;background:#c8c8c8"></div>
<div class="abs" style="left:501px;top:792px;white-space:pre;font-family:Liberation Mono,monospace;font-size:13.2px;line-height:18px;color:#202020">HcnCreateNamespace:4 (1800086C0)</div>
<div class="abs" style="left:758px;top:790px;width:1px;height:18px;background:#c8c8c8"></div>
<div class="abs" style="left:772px;top:790px;width:1px;height:18px;background:#c8c8c8"></div>
<div class="abs" style="left:376px;top:87px;width:1507px;height:701px;overflow:hidden">
</div>
<div class="ln" style="top:90px">4</div>
<div class="code" style="top:90px;width:1454px;overflow:hidden">        PHCN_NAMESPACE Namespace,</div>
<div class="ln" style="top:110px">5</div>
<div class="code" style="top:110px;width:1454px;overflow:hidden">        PWSTR *ErrorRecord)</div>
<div class="ln" style="top:130px">6</div>
<div class="code" style="top:130px;width:1454px;overflow:hidden">{</div>
<div class="ln" style="top:150px">7</div>
<div class="abs" style="left:447px;top:148px;width:63px;height:20px;background:#ffff00"></div>
<div class="code" style="top:150px;width:1454px;overflow:hidden">  <span class="y">HRESULT</span> v5; <span class="l">// edi</span></div>
<div class="ln" style="top:170px">8</div>
<div class="code" style="top:170px;width:1454px;overflow:hidden">  unsigned int v6; <span class="l">// r8d</span></div>
<div class="ln" style="top:190px">9</div>
<div class="code" style="top:190px;width:1454px;overflow:hidden">  const char *v7; <span class="l">// r9</span></div>
<div class="ln" style="top:210px">10</div>
<div class="code" style="top:210px;width:1454px;overflow:hidden">  WCHAR *v8; <span class="l">// rax</span></div>
<div class="ln" style="top:230px">11</div>
<div class="code" style="top:230px;width:1454px;overflow:hidden">  <span class="g">void *v9</span>; <span class="l">// rcx</span></div>
<div class="ln" style="top:250px">12</div>
<div class="abs" style="left:447px;top:248px;width:63px;height:20px;background:#ffff00"></div>
<div class="code" style="top:250px;width:1454px;overflow:hidden">  <span class="y">HRESULT</span> result; <span class="l">// eax</span></div>
<div class="ln" style="top:270px">13</div>
<div class="code" style="top:270px;width:1454px;overflow:hidden">  int v11; <span class="l">// [rsp+20h] [rbp-38h]</span></div>
<div class="ln" style="top:290px">14</div>
<div class="code" style="top:290px;width:1454px;overflow:hidden">  void *v12; <span class="l">// [rsp+30h] [rbp-28h] BYREF</span></div>
<div class="ln" style="top:310px">15</div>
<div class="code" style="top:310px;width:1454px;overflow:hidden">  <span class="g">_QWORD v13[4]</span>; <span class="l">// [rsp+38h] [rbp-20h] BYREF</span></div>
<div class="ln" style="top:330px">16</div>
<div class="code" style="top:330px;width:1454px;overflow:hidden">  <span class="g">wil::details::in1diag3 *retaddr</span>; <span class="l">// [rsp+58h] [rbp+0h]</span></div>
<div class="ln" style="top:350px">17</div>
<div class="code" style="top:350px;width:1454px;overflow:hidden">  PCWSTR v15; <span class="l">// [rsp+68h] [rbp+10h] BYREF</span></div>
<div class="ln" style="top:370px">18</div>
<div class="code" style="top:370px;width:1454px;overflow:hidden">  PHCN_NAMESPACE v16; <span class="l">// [rsp+70h] [rbp+18h] BYREF</span></div>
<div class="ln" style="top:390px">19</div>
<div class="code" style="top:390px;width:1454px;overflow:hidden"></div>
<div class="ln" style="top:410px">20</div>
<div class="dot" style="top:413px"></div>
<div class="code" style="top:410px;width:1454px;overflow:hidden">  <span class="l">v16</span> = <span class="l">Namespace</span>;</div>
<div class="ln" style="top:430px">21</div>
<div class="dot" style="top:433px"></div>
<div class="code" style="top:430px;width:1454px;overflow:hidden">  <span class="l">v15</span> = <span class="l">Settings</span>;</div>
<div class="ln" style="top:450px">22</div>
<div class="dot" style="top:453px"></div>
<div class="code" style="top:450px;width:1454px;overflow:hidden">  <span class="l">v13</span>[1] = -2;</div>
<div class="ln" style="top:470px">23</div>
<div class="dot" style="top:473px"></div>
<div class="code" style="top:470px;width:1454px;overflow:hidden">  try</div>
<div class="ln" style="top:490px">24</div>
<div class="code" style="top:490px;width:1454px;overflow:hidden">  {</div>
<div class="ln" style="top:510px">25</div>
<div class="dot" style="top:513px"></div>
<div class="code" style="top:510px;width:1454px;overflow:hidden">    if ( !<span class="l">Namespace</span> )</div>
<div class="ln" style="top:530px">26</div>
<div class="dot" style="top:533px"></div>
<div class="code" style="top:530px;width:1454px;overflow:hidden">      <span class="b">wil::details::in1diag3::_Throw_Hr</span>(</div>
<div class="ln" style="top:550px">27</div>
<div class="code" style="top:550px;width:1454px;overflow:hidden">        <span class="l">retaddr</span>,</div>
<div class="ln" style="top:570px">28</div>
<div class="code" style="top:570px;width:1454px;overflow:hidden">        (<span class="g">void *</span>)0x10,</div>
<div class="ln" style="top:590px">29</div>
<div class="code" style="top:590px;width:1454px;overflow:hidden">        (<span class="g">unsigned int</span>)<span class="gr">&quot;onecore\\vm\\dv\\net\\hns\\computenetwork\\src\\Common.h&quot;</span>,</div>
<div class="ln" style="top:610px">30</div>
<div class="code" style="top:610px;width:1454px;overflow:hidden">        (<span class="g">const char *</span>)0x80004003LL,</div>
<div class="ln" style="top:630px">31</div>
<div class="code" style="top:630px;width:1454px;overflow:hidden">        <span class="o">v11</span>);</div>
<div class="ln" style="top:650px">32</div>
<div class="dot" style="top:653px"></div>
<div class="code" style="top:650px;width:1454px;overflow:hidden">    *<span class="l">Namespace</span> = 0;</div>
<div class="ln" style="top:670px">33</div>
<div class="dot" style="top:673px"></div>
<div class="code" style="top:670px;width:1454px;overflow:hidden">    if ( <span class="l">ErrorRecord</span> )</div>
<div class="ln" style="top:690px">34</div>
<div class="dot" style="top:693px"></div>
<div class="code" style="top:690px;width:1454px;overflow:hidden">      *<span class="l">ErrorRecord</span> = 0;</div>
<div class="ln" style="top:710px">35</div>
<div class="dot" style="top:713px"></div>
<div class="code" style="top:710px;width:1454px;overflow:hidden">    <span class="l">v12</span> = 0;</div>
<div class="ln" style="top:730px">36</div>
<div class="dot" style="top:733px"></div>
<div class="code" style="top:730px;width:1454px;overflow:hidden">    <span class="l">v13</span>[0] = &amp;<span class="l">v12</span>;</div>
<div class="ln" style="top:750px">37</div>
<div class="dot" style="top:753px"></div>
<div class="code" style="top:750px;width:1454px;overflow:hidden">    <span class="l">v5</span> = <span class="b">Hns::Client::RpcHelper::InvokeRpcFunctionWithBinding&lt;long (*)(void *,_GUID const &amp;,unsigned short const *,void * *,unsigned short * *),_GUID const &amp;,unsigned short const *&gt;(</span></div>
<div class="ln" style="top:770px">38</div>
<div class="code" style="top:770px;width:1454px;overflow:hidden">           <span class="b">HnsRpc_CreateNamespace</span>,</div>
</body></html>
